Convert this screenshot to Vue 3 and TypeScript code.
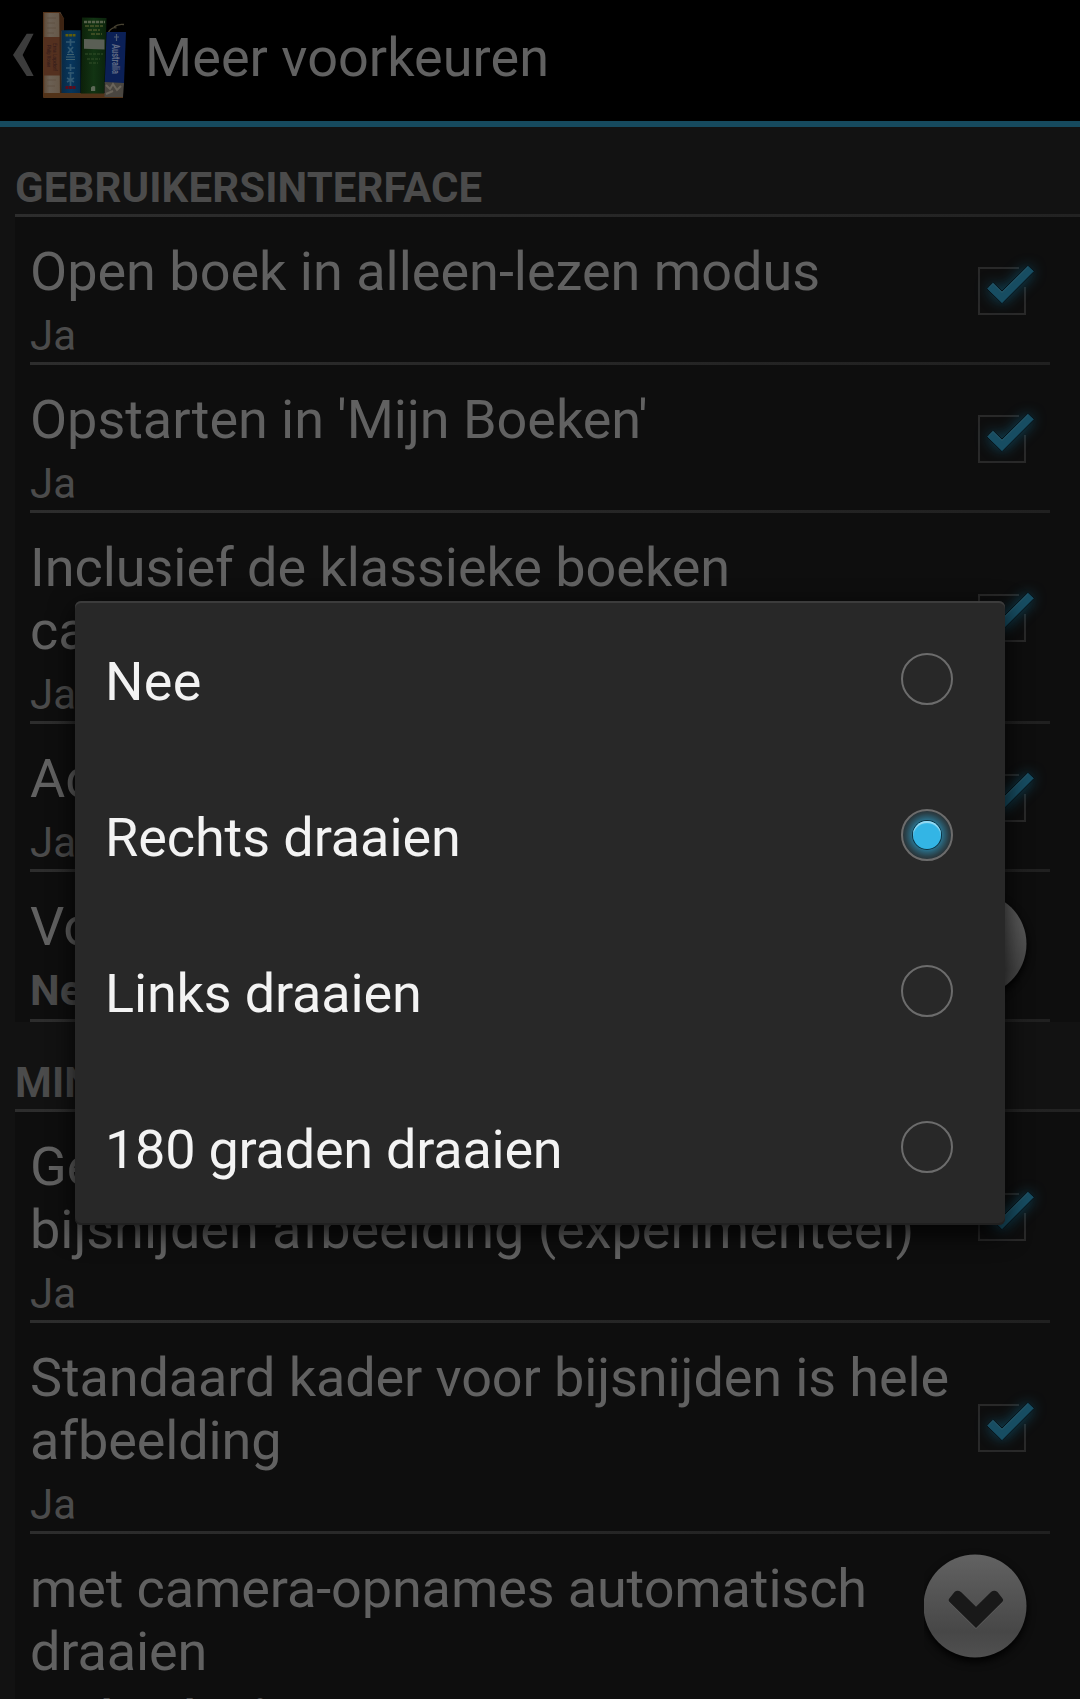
<script setup lang="ts">
interface Preference {
  title: string
  value: string
  kind: 'check' | 'menu'
  tracking?: number
}

interface Section {
  heading: string
  items: Preference[]
}

interface Option {
  label: string
  tracking: number
}

const sections: Section[] = [
  {
    heading: 'GEBRUIKERSINTERFACE',
    items: [
      { title: 'Open boek in alleen-lezen modus', value: 'Ja', kind: 'check' },
      { title: "Opstarten in 'Mijn Boeken'", value: 'Ja', kind: 'check', tracking: -0.04 },
      { title: 'Inclusief de klassieke boeken\ncatalogus', value: 'Ja', kind: 'check', tracking: -0.04 },
      { title: 'Achtergrond', value: 'Ja', kind: 'check' },
      { title: 'Voorkeurstaal', value: 'Nederlands', kind: 'menu' },
    ],
  },
  {
    heading: 'MINIATUREN',
    items: [
      { title: 'Gebruik ingebouwde\nbijsnijden afbeelding (experimenteel)', value: 'Ja', kind: 'check', tracking: -0.03 },
      { title: 'Standaard kader voor bijsnijden is hele\nafbeelding', value: 'Ja', kind: 'check', tracking: -0.11 },
      { title: 'met camera-opnames automatisch\ndraaien', value: 'Rechts draaien', kind: 'menu', tracking: -0.11 },
    ],
  },
]

const options: Option[] = [
  { label: 'Nee', tracking: 0.3 },
  { label: 'Rechts draaien', tracking: -0.08 },
  { label: 'Links draaien', tracking: -0.16 },
  { label: '180 graden draaien', tracking: -0.24 },
]
const selected = 'Rechts draaien'
</script>

<template>
  <div class="screen">
    <header class="bar">
      <svg class="up" width="40" height="121" viewBox="0 0 40 121">
        <path d="M26.7 33.8H33.6L22.6 55L33.6 76H26.7L13 55Z" fill="#3c3c3c" />
      </svg>
      <svg class="books" width="90" height="121" viewBox="40 0 90 121">
        <defs>
          <linearGradient id="cream" x1="0" x2="1"><stop offset="0" stop-color="#5c4733" /><stop offset=".3" stop-color="#6b6054" /><stop offset=".75" stop-color="#665849" /><stop offset="1" stop-color="#4a3017" /></linearGradient>
          <linearGradient id="green" x1="0" x2="1"><stop offset="0" stop-color="#0c2009" /><stop offset=".5" stop-color="#123413" /><stop offset="1" stop-color="#0b230c" /></linearGradient>
          <linearGradient id="blue" x1="0" x2="1"><stop offset="0" stop-color="#092a45" /><stop offset=".5" stop-color="#07365d" /><stop offset="1" stop-color="#062b4a" /></linearGradient>
        </defs>
        <path d="M43.2 93H123v5H43.2Z" fill="#523319" />
        <path d="M43.2 12H60.3L64 18.5L61.5 93H43.2Z" fill="url(#cream)" />
        <path d="M43.5 37H60V75.5H43.5Z" fill="#54301f" />
        <path d="M59.3 12L64 18.5V31H61.3V93H60Z" fill="#3d2413" />
        <path d="M43.2 12.5H60M43.6 12V97" stroke="#54331a" fill="none" />
        <path d="M47 18h9M47 23h8M47 28h9M47 33h7M47 80h9M47 86h8" stroke="#5d4f40" stroke-width=".8" />
        <text transform="translate(53 43) rotate(90)" font-size="6" textLength="28" lengthAdjust="spacingAndGlyphs" fill="#2e181a">Erna Lopdorf</text>
        <text transform="translate(46.5 45) rotate(90)" font-size="6" textLength="22" lengthAdjust="spacingAndGlyphs" fill="#2e181a">Philip Vonne</text>
        <path d="M61.5 30.2H80.5V93H61.5Z" fill="url(#blue)" />
        <path d="M65.5 35.3h10" stroke="#615d0b" stroke-width="2.6" stroke-dasharray="3 .6" />
        <path d="M70.5 39v7M66 42h9M68 47l5 6M73 47l-5 6M70.5 64v7M66 68h9M68 73h6M70.5 72v14M67 82l7-4M67 78l7 4" stroke="#315870" stroke-width="1.7" fill="none" />
        <path d="M67 54.5h7M66 57h9M66 59.5h9" stroke="#40616e" stroke-width="1.2" />
        <path d="M65.5 87.5h10" stroke="#590d1d" stroke-width="2.8" stroke-dasharray="3 .5" />
        <path d="M82 17.5L106.5 18L104.2 93.5H80.8Z" fill="url(#green)" />
        <path d="M84 22h21" stroke="#56614a" stroke-width="2.4" stroke-dasharray="3.2 .8" />
        <path d="M85 26h18M88 30h12M91 34h11" stroke="#4b552a" stroke-width="1.5" stroke-dasharray="4 1" />
        <path d="M84 39L104.5 39.5V49.5L84 48.8Z" fill="#5a5f55" />
        <path d="M85 54h18M87 59h13M89 63h9" stroke="#35512a" stroke-width="1.2" stroke-dasharray="3 1" />
        <path d="M91 87.5q2-2.3 4.2-1v4.5H91Z" fill="#5d6957" />
        <path d="M108.5 32q4-5.5 8-4M114 27q4-3.5 10-2.5" stroke="#484332" stroke-width="1.3" fill="none" />
        <path d="M106.5 32H126L124 83H104.8Z" fill="#0b2056" />
        <path d="M104.7 82L124 83L123 97H104.5Z" fill="#4a4640" />
        <path d="M106 85l4 4 3-5 4 6 4-4M106 94l7-3" stroke="#6a645a" stroke-width="2" fill="none" />
        <path d="M116.5 34v7M114 37h5" stroke="#505c73" stroke-width="1.2" />
        <text transform="translate(112 44) rotate(90)" font-size="10" font-weight="700" textLength="30" lengthAdjust="spacingAndGlyphs" fill="#616b84">Australia</text>
      </svg>
      <h1 class="bar-title">Meer voorkeuren</h1>
    </header>

    <main class="prefs">
      <section v-for="section in sections" :key="section.heading" class="section">
        <h2 class="heading">{{ section.heading }}</h2>
        <div class="rows">
          <div v-for="item in section.items" :key="item.title" class="row" :class="item.kind">
            <div class="copy">
              <div class="title" :style="{ letterSpacing: `${item.tracking ?? 0}px` }">{{ item.title }}</div>
              <div class="value">{{ item.value }}</div>
            </div>
            <svg v-if="item.kind === 'check'" class="box" width="96" height="96" viewBox="0 0 96 96">
              <path d="M65 25H25V71H71V44" fill="none" stroke="#292929" stroke-width="2" />
              <path class="glow" d="M34 46L39 41L48 50L74 24L79 29L48 59Z" fill="#0f4a60" />
              <path d="M32.7 45.7L39 39.3L48 48L74 22.3L80.3 28.3L48 60.7Z" fill="#174d62" stroke="#071319" stroke-width="1" />
              <path d="M34.5 45L39 40.6L48 49.5L74 23.7" fill="none" stroke="#285565" stroke-width="1" />
            </svg>
            <svg v-else class="drop" width="126" height="147" viewBox="0 0 126 147">
              <defs>
                <linearGradient id="disc" x1="0" y1="0" x2="0" y2="1">
                  <stop offset="0" stop-color="#626262" />
                  <stop offset=".75" stop-color="#474747" />
                  <stop offset="1" stop-color="#505050" />
                </linearGradient>
              </defs>
              <circle class="disc" cx="51" cy="72" r="51.5" fill="url(#disc)" />
              <path d="M25.3 65.5Q23.8 67 25.3 68.8L52 95L78.5 68.8Q80 67 78.5 65.5L73.5 59Q70.3 56.3 67 59L52 73.7L37 59Q33.3 56.3 30.5 59Z" fill="#5c5c5c" />
              <path d="M25.3 64.5Q23.8 66 25.3 67.8L52 94L78.5 67.8Q80 66 78.5 64.5L73.5 58Q70.3 55.3 67 58L52 72.7L37 58Q33.3 55.3 30.5 58Z" fill="#191919" />
            </svg>
          </div>
        </div>
      </section>
    </main>

    <div class="dialog" role="dialog">
      <div v-for="option in options" :key="option.label" class="option">
        <span :style="{ letterSpacing: `${option.tracking}px` }">{{ option.label }}</span>
        <i class="radio" :class="{ on: option.label === selected }"></i>
      </div>
    </div>
  </div>
</template>

<style>
body {
  background: #111;
}
</style>

<style scoped>
.screen {
  position: relative;
  width: 1080px;
  height: 1699px;
  overflow: hidden;
  background: #121212;
  font-family: Roboto, sans-serif;
}
.bar {
  display: flex;
  height: 121px;
  border-bottom: 6px solid #164a5e;
  background: #000;
}
.up,
.books,
.box,
.drop {
  display: block;
  flex: none;
}
.bar-title {
  margin: 26px 0 0 15px;
  font-size: 54px;
  line-height: 63px;
  font-weight: 400;
  letter-spacing: 0.05px;
  color: #616161;
}
.prefs {
  padding-left: 15px;
}
.heading {
  height: 49px;
  margin: 0;
  padding: 36px 0 2px;
  border-bottom: 3px solid #2b2b2b;
  border-image: linear-gradient(90deg, #2d2d2d, #222) 1;
  font-size: 42px;
  line-height: 49px;
  font-weight: 700;
  letter-spacing: 0.11px;
  color: #4b4b4b;
}
.rows {
  padding: 0 30px 0 15px;
  background: #0e0e0e;
}
.row {
  display: flex;
  align-items: center;
  border-bottom: 3px solid #2b2b2b;
  border-image: linear-gradient(90deg, #2d2d2d, #202020) 1;
}
.row.menu {
  align-items: flex-start;
  min-height: 147px;
}
.copy {
  flex: 1;
  min-width: 0;
  padding: 23px 0 2px;
}
.title {
  white-space: pre;
  font-size: 54px;
  line-height: 63px;
  color: #616161;
}
.value {
  margin-top: 8px;
  font-size: 42px;
  line-height: 49px;
  color: #4b4b4b;
}
.menu .value {
  font-weight: 700;
}
.menu .copy {
  padding-bottom: 4px;
}
.box {
  margin-top: 2.7px;
}
.glow {
  filter: drop-shadow(0 0 7px #0f6180);
}
.disc {
  filter: drop-shadow(0 4px 4px #000);
}
.dialog {
  position: absolute;
  left: 75px;
  top: 601px;
  width: 930px;
  height: 624px;
  border-radius: 6px;
  background: #282828;
  box-shadow: 0 8px 26px rgba(0, 0, 0, 0.85), inset 0 2px 0 #3c3c3c, inset 0 -2px 0 #202020;
}
.option {
  display: flex;
  align-items: center;
  justify-content: space-between;
  height: 156px;
  padding: 0 52px 0 30px;
  font-size: 54px;
  line-height: 63px;
  color: #f3f3f3;
}
.option span {
  padding-top: 4px;
}
.radio {
  display: flex;
  align-items: center;
  justify-content: center;
  box-sizing: border-box;
  width: 52px;
  height: 52px;
  border: 2px solid #6c6c6c;
  border-radius: 50%;
}
.radio.on {
  background: radial-gradient(circle closest-side, #2a7896 0 58%, #2a5a6c 74%, #2a4048 90%, #2a353a 100%);
}
.radio.on::before {
  content: '';
  width: 28px;
  height: 28px;
  border-radius: 50%;
  background: #33b5e5;
  box-shadow: 0 0 0 1px #0d3443, inset 0 2px 1px #9bdcf3;
}
</style>
